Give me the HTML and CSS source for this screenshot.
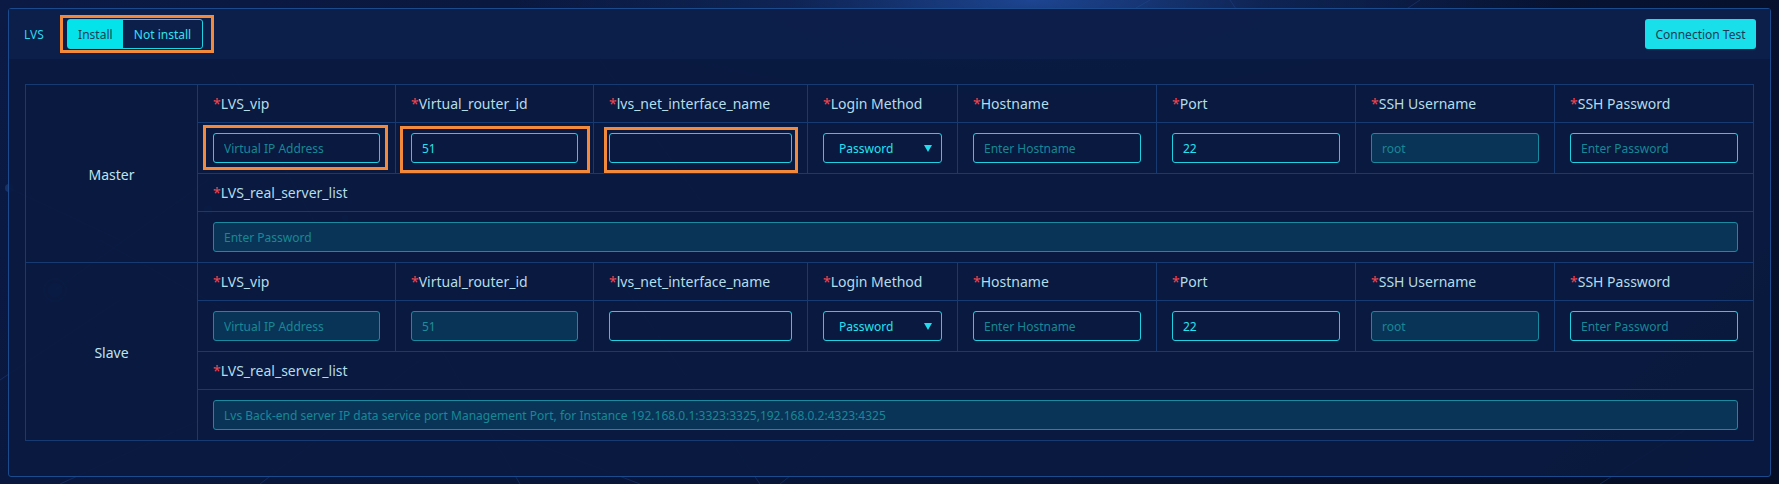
FILE: index.html
```html
<!DOCTYPE html>
<html lang="en">
<head>
<meta charset="utf-8">
<title>LVS</title>
<link rel="stylesheet" href="styles.css">
</head>
<body>
<svg class="bg-deco" width="1779" height="484" viewBox="0 0 1779 484" aria-hidden="true">
  <g stroke="#2a4f96" stroke-width="1" fill="none" opacity="0.35">
    <line x1="0" y1="380" x2="120" y2="300"/>
    <line x1="9" y1="188" x2="120" y2="240"/>
    <line x1="55" y1="290" x2="208" y2="180"/>
    <line x1="100" y1="240" x2="260" y2="330"/>
    <line x1="230" y1="70" x2="330" y2="250"/>
    <line x1="200" y1="420" x2="60" y2="484"/>
    <line x1="260" y1="484" x2="420" y2="360"/>
    <line x1="430" y1="330" x2="520" y2="484"/>
    <line x1="500" y1="430" x2="640" y2="484"/>
    <line x1="1150" y1="0" x2="1080" y2="40"/>
    <line x1="1230" y1="0" x2="1250" y2="30"/>
    <line x1="1420" y1="0" x2="1390" y2="20"/>
    <line x1="600" y1="60" x2="700" y2="200"/>
    <line x1="620" y1="280" x2="760" y2="484"/>
    <line x1="780" y1="484" x2="860" y2="420"/>
    <line x1="1600" y1="484" x2="1700" y2="420"/>
  </g>
  <g fill="#2a4f96" opacity="0.45">
    <circle cx="9" cy="188" r="4"/>
    <circle cx="55" cy="290" r="7"/>
    <circle cx="208" cy="210" r="4"/>
    <circle cx="345" cy="218" r="3"/>
  </g>
  <circle cx="55" cy="290" r="11" fill="none" stroke="#2a4f96" stroke-width="1.5" opacity="0.4"/>
</svg>

<div class="panel">
  <div class="panel-head">
    <span class="head-label">LVS</span>
    <div class="toggle mark-toggle">
      <button class="seg seg-on" type="button">Install</button>
      <button class="seg" type="button">Not install</button>
    </div>
    <button class="btn-test" type="button">Connection Test</button>
  </div>

  <div class="panel-body">
    <div class="grid">
      <!-- Master -->
      <div class="role role-master">Master</div>
      <div class="cell head"><span class="req">*</span>LVS_vip</div>
      <div class="cell head"><span class="req">*</span>Virtual_router_id</div>
      <div class="cell head"><span class="req">*</span>lvs_net_interface_name</div>
      <div class="cell head"><span class="req">*</span>Login Method</div>
      <div class="cell head"><span class="req">*</span>Hostname</div>
      <div class="cell head"><span class="req">*</span>Port</div>
      <div class="cell head"><span class="req">*</span>SSH Username</div>
      <div class="cell head"><span class="req">*</span>SSH Password</div>

      <div class="cell field"><div class="wrap mark mark-a"><input class="inp" type="text" placeholder="Virtual IP Address"></div></div>
      <div class="cell field"><div class="wrap mark mark-b"><input class="inp" type="text" value="51"></div></div>
      <div class="cell field"><div class="wrap mark mark-c"><input class="inp" type="text"></div></div>
      <div class="cell field"><div class="select"><span>Password</span><svg class="caret" width="8" height="7" viewBox="0 0 8 7"><path d="M0 0H8L4 7Z" fill="#22dcee"/></svg></div></div>
      <div class="cell field"><div class="wrap"><input class="inp" type="text" placeholder="Enter Hostname"></div></div>
      <div class="cell field"><div class="wrap"><input class="inp" type="text" value="22"></div></div>
      <div class="cell field"><div class="wrap"><input class="inp inp-dis" type="text" placeholder="root" disabled></div></div>
      <div class="cell field"><div class="wrap"><input class="inp" type="text" placeholder="Enter Password"></div></div>

      <div class="cell head span8"><span class="req">*</span>LVS_real_server_list</div>
      <div class="cell field span8"><div class="wrap"><input class="inp inp-dis" type="text" placeholder="Enter Password" disabled></div></div>

      <!-- Slave -->
      <div class="role role-slave">Slave</div>
      <div class="cell head"><span class="req">*</span>LVS_vip</div>
      <div class="cell head"><span class="req">*</span>Virtual_router_id</div>
      <div class="cell head"><span class="req">*</span>lvs_net_interface_name</div>
      <div class="cell head"><span class="req">*</span>Login Method</div>
      <div class="cell head"><span class="req">*</span>Hostname</div>
      <div class="cell head"><span class="req">*</span>Port</div>
      <div class="cell head"><span class="req">*</span>SSH Username</div>
      <div class="cell head"><span class="req">*</span>SSH Password</div>

      <div class="cell field"><div class="wrap"><input class="inp inp-dis" type="text" placeholder="Virtual IP Address" disabled></div></div>
      <div class="cell field"><div class="wrap"><input class="inp inp-dis inp-dis-val" type="text" value="51" disabled></div></div>
      <div class="cell field"><div class="wrap"><input class="inp" type="text"></div></div>
      <div class="cell field"><div class="select"><span>Password</span><svg class="caret" width="8" height="7" viewBox="0 0 8 7"><path d="M0 0H8L4 7Z" fill="#22dcee"/></svg></div></div>
      <div class="cell field"><div class="wrap"><input class="inp" type="text" placeholder="Enter Hostname"></div></div>
      <div class="cell field"><div class="wrap"><input class="inp" type="text" value="22"></div></div>
      <div class="cell field"><div class="wrap"><input class="inp inp-dis" type="text" placeholder="root" disabled></div></div>
      <div class="cell field"><div class="wrap"><input class="inp" type="text" placeholder="Enter Password"></div></div>

      <div class="cell head span8"><span class="req">*</span>LVS_real_server_list</div>
      <div class="cell field span8"><div class="wrap"><input class="inp inp-dis" type="text" placeholder="Lvs Back-end server IP data service port Management Port, for Instance 192.168.0.1:3323:3325,192.168.0.2:4323:4325" disabled></div></div>
    </div>
  </div>
</div>
</body>
</html>
```

FILE: styles.css
```css
* {
  box-sizing: border-box;
}

html,
body {
  margin: 0;
}

body {
  width: 1779px;
  height: 484px;
  padding: 8px;
  overflow: hidden;
  position: relative;
  font-family: "Noto Sans", "Open Sans", sans-serif;
  background:
    radial-gradient(ellipse 520px 120px at 58% 0%, #1d4591 0%, rgba(20, 50, 110, 0.5) 45%, rgba(8, 20, 50, 0) 100%),
    linear-gradient(135deg, #0b1a44 0%, #081538 55%, #050d24 100%);
}

.bg-deco {
  position: absolute;
  left: 0;
  top: 0;
  z-index: 0;
}

.panel {
  position: relative;
  z-index: 1;
  height: 469px;
  border: 1px solid #1b4b8d;
  border-radius: 3px;
  background: rgba(10, 26, 65, 0.93);
  display: flex;
  flex-direction: column;
}

.panel-head {
  height: 50px;
  flex: none;
  display: flex;
  align-items: center;
  padding: 0 14px 0 15px;
  background: rgba(13, 31, 75, 0.9);
}

.head-label {
  color: #2fd6ea;
  font-size: 12px;
  margin-right: 23px;
}

.toggle {
  position: relative;
  display: flex;
  height: 30px;
  border: 1px solid #1fd3e3;
  border-radius: 3px;
}

.mark-toggle::after {
  content: "";
  position: absolute;
  top: -5px;
  right: -12px;
  bottom: -5px;
  left: -8px;
  border: 3px solid #f2893b;
  pointer-events: none;
}

.seg {
  font-family: inherit;
  font-size: 12px;
  border: 0;
  margin: 0;
  padding: 0 11px;
  background: transparent;
  color: #2fe2f2;
  cursor: pointer;
}

.seg-on {
  background: #05e3ea;
  color: #1f3e58;
  width: 55px;
  padding: 0;
}

.btn-test {
  margin-left: auto;
  width: 111px;
  height: 30px;
  border: 0;
  border-radius: 3px;
  background: #19dfea;
  color: #1d3b57;
  font-family: inherit;
  font-size: 12px;
  padding: 0;
  cursor: pointer;
}

.panel-body {
  flex: 1;
  padding: 25px 16px 0 16px;
}

.grid {
  display: grid;
  grid-template-columns: 172px 198px 198px 214px 150px 199px 199px 199px 1fr;
  grid-template-rows: 38px 51px 38px 51px 38px 51px 38px 51px;
  border-top: 1px solid #173a72;
  border-left: 1px solid #173a72;
}

.cell,
.role {
  border-right: 1px solid #173a72;
  border-bottom: 1px solid #173a72;
}

.role {
  grid-column: 1;
  grid-row: span 4;
  display: flex;
  align-items: center;
  justify-content: center;
  color: #bfe3ee;
  font-size: 14px;
  padding-top: 1px;
}

.head {
  display: flex;
  align-items: center;
  padding: 0 15px;
  color: #b5dde9;
  font-size: 14px;
  white-space: nowrap;
}

.req {
  color: #f5464f;
}

.span8 {
  grid-column: 2 / span 8;
}

.field {
  display: flex;
  align-items: center;
  padding: 0 15px 0 15px;
}

.wrap {
  position: relative;
  width: 100%;
}

.mark::after {
  content: "";
  position: absolute;
  border: 3px solid #f2893b;
  pointer-events: none;
}

.mark-a::after {
  top: -8px;
  right: -8px;
  bottom: -7px;
  left: -10px;
}

.mark-b::after {
  top: -7px;
  right: -12px;
  bottom: -10px;
  left: -11px;
}

.mark-c::after {
  top: -6px;
  right: -6px;
  bottom: -10px;
  left: -5px;
}

.inp {
  display: block;
  width: 100%;
  height: 30px;
  margin: 0;
  padding: 0 10px;
  border: 1px solid #1fd0e2;
  border-radius: 3px;
  background: transparent;
  color: #25e2f2;
  font-family: inherit;
  font-size: 12px;
  outline: none;
}

.inp::placeholder {
  color: #178896;
  opacity: 1;
}

.inp-dis {
  background: #0a3457;
  border-color: #1a8aa0;
  color: #178896;
}

.inp-dis-val {
  color: #1d8d9c;
  -webkit-text-fill-color: #1d8d9c;
}

.select {
  width: 100%;
  height: 30px;
  display: flex;
  align-items: center;
  justify-content: space-between;
  padding: 0 9px 0 15px;
  border: 1px solid #1fd0e2;
  border-radius: 3px;
  color: #25e2f2;
  font-size: 12px;
}

.caret {
  display: block;
}
```
